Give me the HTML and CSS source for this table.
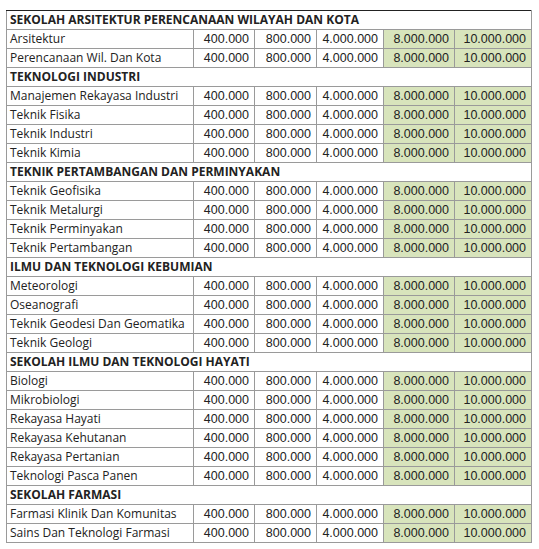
FILE: index.html
```html
<!DOCTYPE html>
<html>
<head>
<meta charset="utf-8">
<link rel="stylesheet" href="styles.css">
</head>
<body>
<table class="fee">
<colgroup>
<col class="c-name"><col class="c1"><col class="c2"><col class="c3"><col class="c4"><col class="c5">
</colgroup>
<tbody>
<tr class="sec"><td colspan="6">SEKOLAH ARSITEKTUR PERENCANAAN WILAYAH DAN KOTA</td></tr>
<tr><td>Arsitektur</td><td>400.000</td><td>800.000</td><td>4.000.000</td><td class="g">8.000.000</td><td class="g">10.000.000</td></tr>
<tr><td>Perencanaan Wil. Dan Kota</td><td>400.000</td><td>800.000</td><td>4.000.000</td><td class="g">8.000.000</td><td class="g">10.000.000</td></tr>
<tr class="sec"><td colspan="6">TEKNOLOGI INDUSTRI</td></tr>
<tr><td>Manajemen Rekayasa Industri</td><td>400.000</td><td>800.000</td><td>4.000.000</td><td class="g">8.000.000</td><td class="g">10.000.000</td></tr>
<tr><td>Teknik Fisika</td><td>400.000</td><td>800.000</td><td>4.000.000</td><td class="g">8.000.000</td><td class="g">10.000.000</td></tr>
<tr><td>Teknik Industri</td><td>400.000</td><td>800.000</td><td>4.000.000</td><td class="g">8.000.000</td><td class="g">10.000.000</td></tr>
<tr><td>Teknik Kimia</td><td>400.000</td><td>800.000</td><td>4.000.000</td><td class="g">8.000.000</td><td class="g">10.000.000</td></tr>
<tr class="sec"><td colspan="6">TEKNIK PERTAMBANGAN DAN PERMINYAKAN</td></tr>
<tr><td>Teknik Geofisika</td><td>400.000</td><td>800.000</td><td>4.000.000</td><td class="g">8.000.000</td><td class="g">10.000.000</td></tr>
<tr><td>Teknik Metalurgi</td><td>400.000</td><td>800.000</td><td>4.000.000</td><td class="g">8.000.000</td><td class="g">10.000.000</td></tr>
<tr><td>Teknik Perminyakan</td><td>400.000</td><td>800.000</td><td>4.000.000</td><td class="g">8.000.000</td><td class="g">10.000.000</td></tr>
<tr><td>Teknik Pertambangan</td><td>400.000</td><td>800.000</td><td>4.000.000</td><td class="g">8.000.000</td><td class="g">10.000.000</td></tr>
<tr class="sec"><td colspan="6">ILMU DAN TEKNOLOGI KEBUMIAN</td></tr>
<tr><td>Meteorologi</td><td>400.000</td><td>800.000</td><td>4.000.000</td><td class="g">8.000.000</td><td class="g">10.000.000</td></tr>
<tr><td>Oseanografi</td><td>400.000</td><td>800.000</td><td>4.000.000</td><td class="g">8.000.000</td><td class="g">10.000.000</td></tr>
<tr><td>Teknik Geodesi Dan Geomatika</td><td>400.000</td><td>800.000</td><td>4.000.000</td><td class="g">8.000.000</td><td class="g">10.000.000</td></tr>
<tr><td>Teknik Geologi</td><td>400.000</td><td>800.000</td><td>4.000.000</td><td class="g">8.000.000</td><td class="g">10.000.000</td></tr>
<tr class="sec"><td colspan="6">SEKOLAH ILMU DAN TEKNOLOGI HAYATI</td></tr>
<tr><td>Biologi</td><td>400.000</td><td>800.000</td><td>4.000.000</td><td class="g">8.000.000</td><td class="g">10.000.000</td></tr>
<tr><td>Mikrobiologi</td><td>400.000</td><td>800.000</td><td>4.000.000</td><td class="g">8.000.000</td><td class="g">10.000.000</td></tr>
<tr><td>Rekayasa Hayati</td><td>400.000</td><td>800.000</td><td>4.000.000</td><td class="g">8.000.000</td><td class="g">10.000.000</td></tr>
<tr><td>Rekayasa Kehutanan</td><td>400.000</td><td>800.000</td><td>4.000.000</td><td class="g">8.000.000</td><td class="g">10.000.000</td></tr>
<tr><td>Rekayasa Pertanian</td><td>400.000</td><td>800.000</td><td>4.000.000</td><td class="g">8.000.000</td><td class="g">10.000.000</td></tr>
<tr><td>Teknologi Pasca Panen</td><td>400.000</td><td>800.000</td><td>4.000.000</td><td class="g">8.000.000</td><td class="g">10.000.000</td></tr>
<tr class="sec"><td colspan="6">SEKOLAH FARMASI</td></tr>
<tr><td>Farmasi Klinik Dan Komunitas</td><td>400.000</td><td>800.000</td><td>4.000.000</td><td class="g">8.000.000</td><td class="g">10.000.000</td></tr>
<tr><td>Sains Dan Teknologi Farmasi</td><td>400.000</td><td>800.000</td><td>4.000.000</td><td class="g">8.000.000</td><td class="g">10.000.000</td></tr>
</tbody>
</table>
</body>
</html>
```

FILE: styles.css
```css
html, body {
  margin: 0;
  padding: 0;
  background: #fff;
}
body {
  padding: 10px 0 0 6px;
}
.fee {
  border-collapse: collapse;
  table-layout: fixed;
  width: 525px;
  font-family: "Open Sans", sans-serif;
  font-size: 12px;
  color: #222;
  border-top: 1px solid #222;
}
.c-name { width: 187px; }
.c1 { width: 61px; }
.c2 { width: 62px; }
.c3 { width: 67px; }
.c4 { width: 71px; }
.c5 { width: 77px; }
.fee td {
  border: 1px solid #9a9a9a;
  height: 18px;
  padding: 0 5px 0 3px;
  line-height: 18px;
  white-space: nowrap;
  text-align: right;
  overflow: hidden;
  font-family: "Liberation Sans", Arial, sans-serif;
  font-size: 12.5px;
}
.fee td:first-child {
  text-align: left;
  font-family: "Open Sans", sans-serif;
  font-size: 12px;
}
.fee .sec td {
  font-weight: bold;
  text-align: left;
}
.fee td.g {
  background: #d8e4bc;
}
.fee tr:first-child td {
  border-top: 1px solid #222;
}
```
